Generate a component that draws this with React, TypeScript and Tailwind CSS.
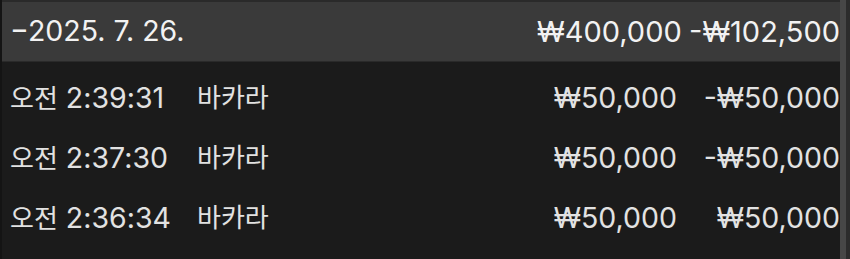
import React from 'react';

const rows = [
  { time: '2:39:31', game: '바카라', bet: '₩50,000', result: '-₩50,000' },
  { time: '2:37:30', game: '바카라', bet: '₩50,000', result: '-₩50,000' },
  { time: '2:36:34', game: '바카라', bet: '₩50,000', result: '₩50,000' },
];

const font = { fontFamily: 'Inter, "Noto Sans CJK KR", sans-serif' };

export default function App() {
  return (
    <div className="h-[259px] w-[850px] overflow-hidden bg-[#1b1b1b] text-[28.5px] leading-none" style={font}>
      <div className="flex h-full">
        <div className="flex-1 border-l-2 border-[#141414]">
          {/* day header */}
          <div className="flex h-[62px] items-center border-t-2 border-b border-[#2a2a2a] bg-[#3a3a3a] text-[#f2f2f2]">
            <span className="pl-2">−2025. 7. 26.</span>
            <span className="ml-auto w-[140px] text-right text-[29px]">₩400,000</span>
            <span className="w-[163px] text-right text-[29px]">-₩102,500</span>
          </div>
          {/* transactions */}
          <div className="pt-[6px] text-[#e2e2e2]">
            {rows.map((r, i) => (
              <div key={i} className="flex h-[60px] items-center">
                <span className="w-[195px] pl-2">
                  <span className="text-[26px]">오전</span> {r.time}
                </span>
                <span className="text-[26px]">{r.game}</span>
                <span className="ml-auto w-[140px] text-right">{r.bet}</span>
                <span className="w-[163px] text-right">{r.result}</span>
              </div>
            ))}
          </div>
        </div>
        {/* scrollbar track */}
        <div className="flex w-[10px]">
          <div className="w-[6px] bg-[#474747]" />
          <div className="flex-1 bg-[#2c2c2c]" />
        </div>
      </div>
    </div>
  );
}
